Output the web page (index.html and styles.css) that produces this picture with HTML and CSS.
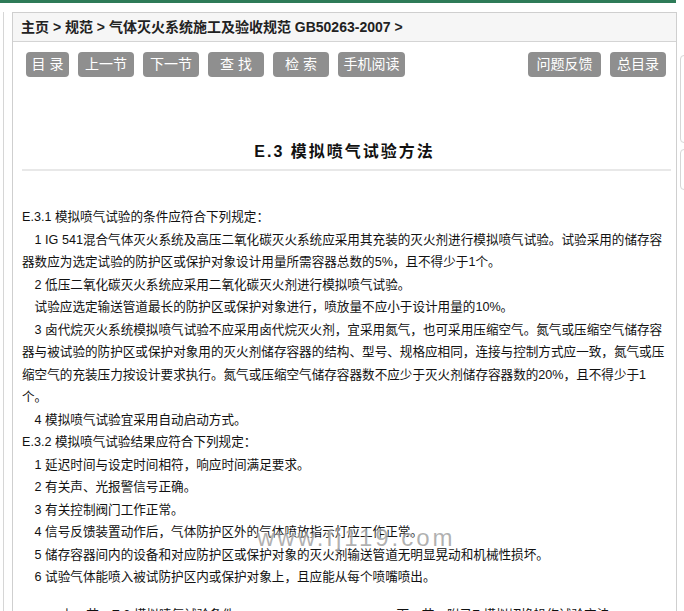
FILE: index.html
```html
<!DOCTYPE html>
<html lang="zh-CN">
<head>
  <meta charset="UTF-8" />
  <title>E.3 模拟喷气试验方法</title>
  <link rel="stylesheet" href="styles.css">
</head>
<body>
  <div class="topbar"></div>

  <div class="page">
    <div class="leftcol"></div>

    <div class="main">
      <div class="crumb">主页 &gt; 规范 &gt; 气体灭火系统施工及验收规范 GB50263-2007 &gt;</div>

      <div class="toolbar">
        <div class="btn-group">
          <a class="btn w-sm">目 录</a>
          <a class="btn">上一节</a>
          <a class="btn">下一节</a>
          <a class="btn">查 找</a>
          <a class="btn">检 索</a>
          <a class="btn w-lg">手机阅读</a>
        </div>
        <div class="btn-group">
          <a class="btn w-xl">问题反馈</a>
          <a class="btn">总目录</a>
        </div>
      </div>

      <h1 class="title">E.3 模拟喷气试验方法</h1>
      <div class="rule"></div>

      <div class="content">
        <p class="clause">E.3.1 模拟喷气试验的条件应符合下列规定：</p>
        <p class="item">1 IG 541混合气体灭火系统及高压二氧化碳灭火系统应采用其充装的灭火剂进行模拟喷气试验。试验采用的储存容器数应为选定试验的防护区或保护对象设计用量所需容器总数的5%，且不得少于1个。</p>
        <p class="item">2 低压二氧化碳灭火系统应采用二氧化碳灭火剂进行模拟喷气试验。</p>
        <p class="item">试验应选定输送管道最长的防护区或保护对象进行，喷放量不应小于设计用量的10%。</p>
        <p class="item">3 卤代烷灭火系统模拟喷气试验不应采用卤代烷灭火剂，宜采用氮气，也可采用压缩空气。氮气或压缩空气储存容器与被试验的防护区或保护对象用的灭火剂储存容器的结构、型号、规格应相同，连接与控制方式应一致，氮气或压缩空气的充装压力按设计要求执行。氮气或压缩空气储存容器数不应少于灭火剂储存容器数的20%，且不得少于1个。</p>
        <p class="item">4 模拟喷气试验宜采用自动启动方式。</p>
        <p class="clause">E.3.2 模拟喷气试验结果应符合下列规定：</p>
        <p class="item">1 延迟时间与设定时间相符，响应时间满足要求。</p>
        <p class="item">2 有关声、光报警信号正确。</p>
        <p class="item">3 有关控制阀门工作正常。</p>
        <p class="item">4 信号反馈装置动作后，气体防护区外的气体喷放指示灯应工作正常。</p>
        <p class="item">5 储存容器间内的设备和对应防护区或保护对象的灭火剂输送管道无明显晃动和机械性损坏。</p>
        <p class="item">6 试验气体能喷入被试防护区内或保护对象上，且应能从每个喷嘴喷出。</p>

        <div class="watermark">www.fj119.com</div>
      </div>

      <div class="pager">
        <span>上一节：E.2 模拟喷气试验条件</span>
        <span>下一节：附录F 模拟切换操作试验方法</span>
      </div>
    </div>

    <div class="rightcol">
      <div class="side-box tall"></div>
      <div class="side-box"></div>
    </div>
  </div>
</body>
</html>
```

FILE: styles.css
```css
* { box-sizing: border-box; }
body {
  margin: 0;
  background: #fff;
  color: #111;
  font-family: "Liberation Sans", "Noto Sans CJK SC", sans-serif;
  overflow: hidden;
}
.topbar {
  width: 676px;
  height: 3px;
  background: #2e7b58;
}
.page {
  display: flex;
  align-items: flex-start;
  margin-top: 9px;
}
.leftcol {
  width: 4px;
  height: 700px;
  border-right: 1px solid #d6d6d6;
  flex-shrink: 0;
}
.main {
  width: 665px;
  margin-left: 8px;
  border: 1px solid #cfcfcf;
  flex-shrink: 0;
  height: 700px;
}
.crumb {
  height: 29px;
  line-height: 28px;
  padding-left: 8px;
  background: #f6f6f6;
  border-bottom: 1px solid #d4d4d4;
  font-size: 14px;
  font-weight: bold;
  color: #222;
}
.toolbar {
  display: flex;
  justify-content: space-between;
  padding: 10px 10px 0 13px;
}
.btn-group {
  display: flex;
  gap: 9px;
}
.btn {
  display: block;
  width: 56px;
  height: 25px;
  line-height: 25px;
  text-align: center;
  background: #8f8f8f;
  color: #fff;
  font-size: 14px;
  border-radius: 4px;
  cursor: pointer;
}
.btn.w-sm { width: 43px; }
.btn.w-lg { width: 67px; }
.btn.w-xl { width: 73px; }
.btn:hover { background: #777; }
.title {
  margin: 63px 0 0;
  text-align: center;
  font-size: 16px;
  line-height: 24px;
  letter-spacing: 2px;
  font-weight: bold;
  color: #111;
}
.rule {
  height: 2px;
  background: #e8e8e8;
  margin: 5px 5px 0 9px;
}
.content {
  position: relative;
  margin-top: 35px;
  padding: 0 8px 0 9px;
  font-size: 12.6px;
  line-height: 22.5px;
}
.content p {
  margin: 0;
}
.item {
  text-indent: 1em;
}
/* site watermark drawn over the text */
.watermark {
  position: absolute;
  left: 244px;
  top: 318px;
  font-size: 24px;
  line-height: 28px;
  letter-spacing: 3px;
  color: rgba(125, 125, 125, 0.6);
  text-shadow: 0 0 2px rgba(255, 255, 255, 0.9);
  pointer-events: none;
}
.pager {
  display: flex;
  gap: 162px;
  margin-top: 15px;
  padding-left: 48px;
  font-size: 12.6px;
  line-height: 22.5px;
}
.rightcol {
  margin-left: 3px;
  margin-top: 43px;
  display: flex;
  flex-direction: column;
  gap: 6px;
  flex-shrink: 0;
}
.side-box {
  width: 200px;
  height: 41px;
  border: 1px solid #d6d6d6;
  border-radius: 4px;
}
.side-box.tall {
  height: 88px;
}
```
